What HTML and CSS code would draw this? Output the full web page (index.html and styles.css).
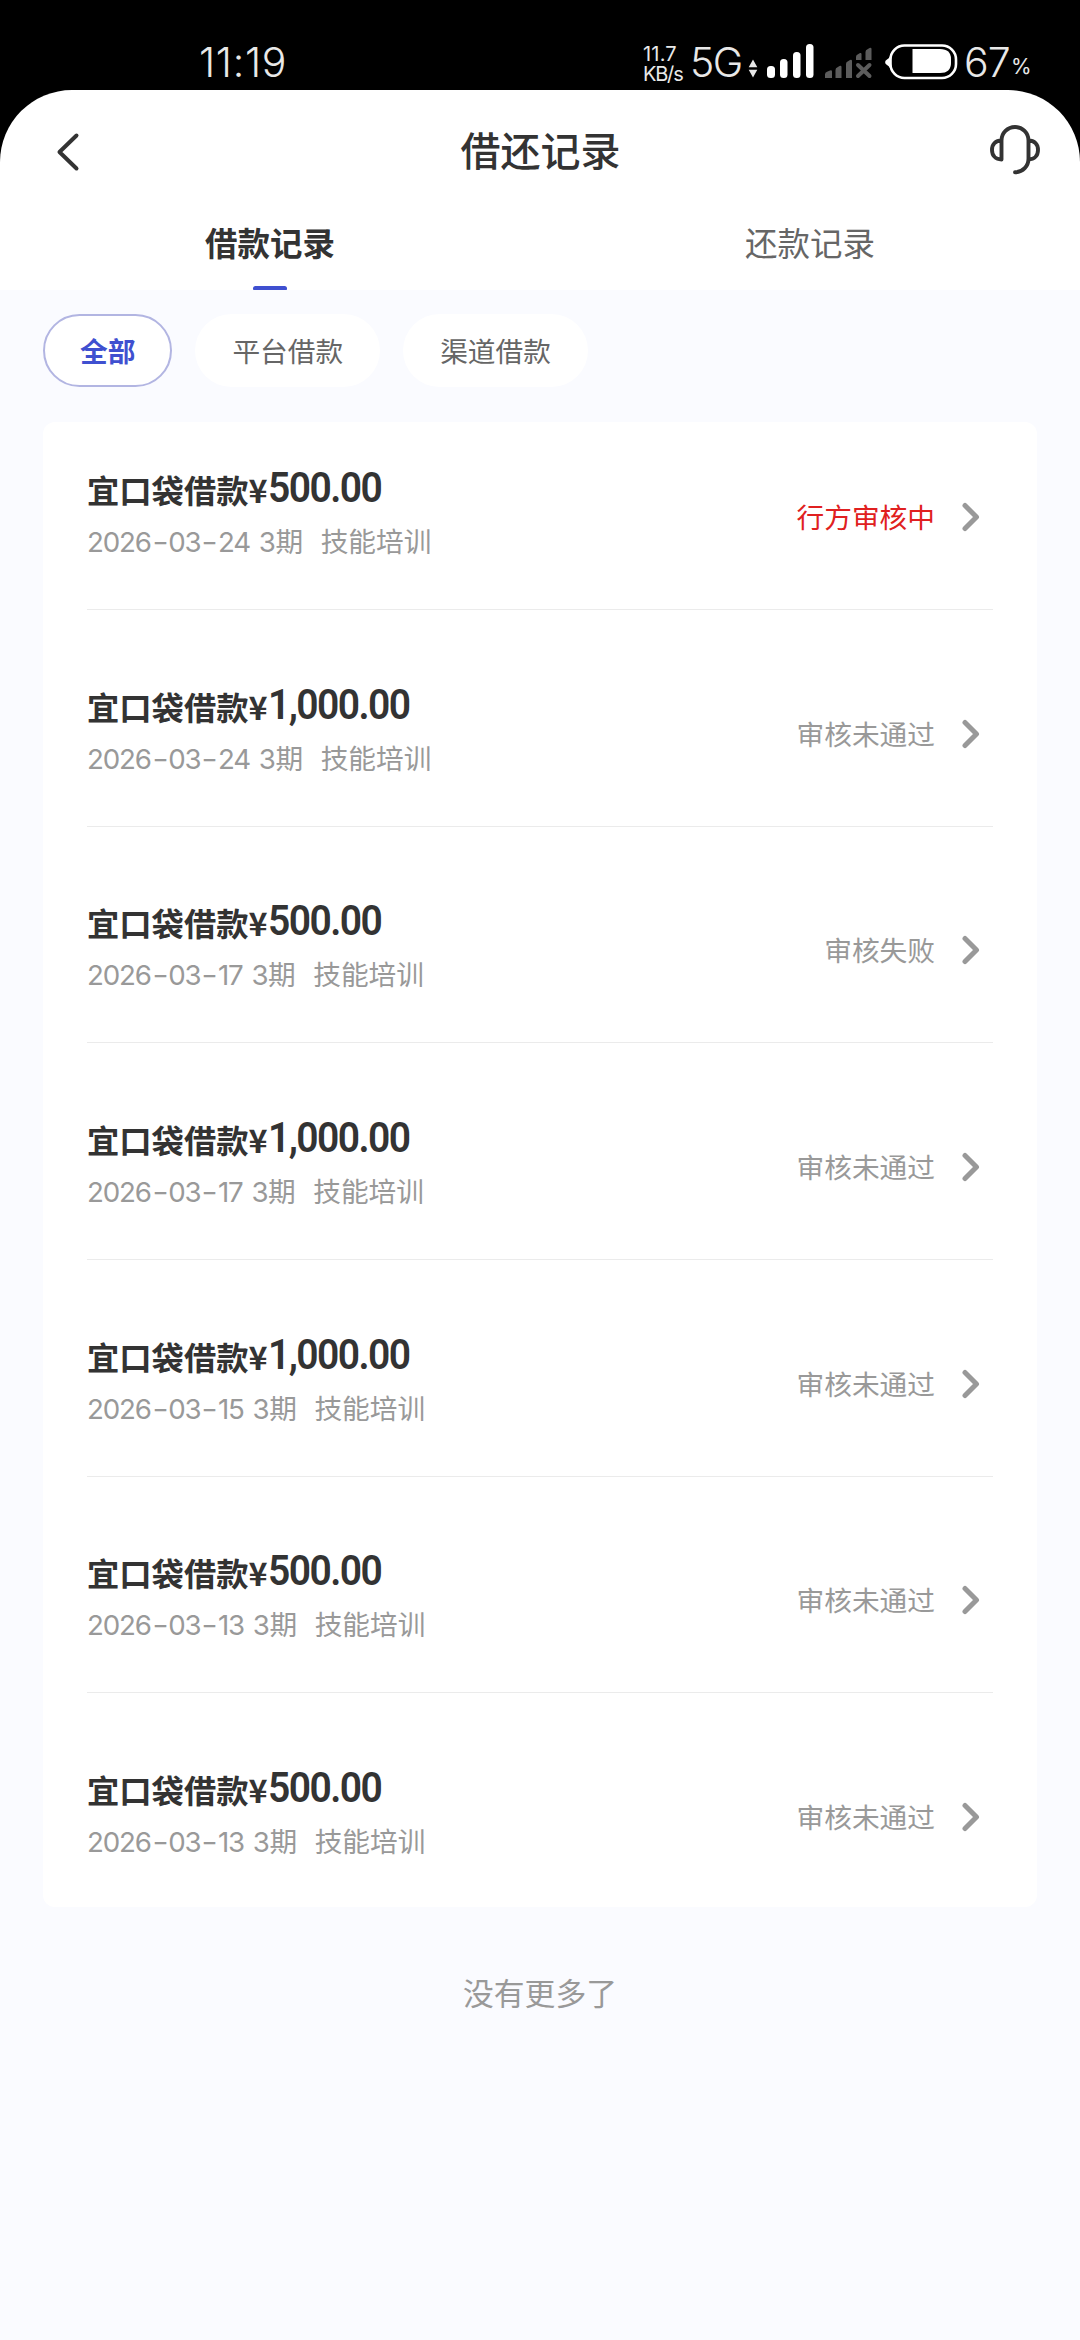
FILE: index.html
```html
<!DOCTYPE html>
<html lang="zh-CN">
<head>
<meta charset="utf-8">
<title>借还记录</title>
<link rel="stylesheet" href="styles.css">
</head>
<body>
<div class="statusbar">
  <span class="clock">11:19</span>
  <div class="status-right">
    <div class="speed"><span class="rate">11.7</span><span class="unit">KB/s</span></div>
    <span class="network">5G</span>
    <svg class="signals" width="212" height="40" viewBox="747 42 212 40">
      <g fill="#e8e8e8"><path d="M753 59.5l4.3 7.8h-8.6zM753 77.500l4.300-7.800h-8.600z"/></g>
      <g fill="#fff"><rect x="767" y="66" width="8" height="12" rx="3.500"/><rect x="780" y="59" width="7.500" height="19" rx="3.500"/><rect x="793" y="52" width="7.500" height="26" rx="3.500"/><rect x="806" y="44" width="7.500" height="34" rx="3.500"/></g>
      <g fill="#5c5c5c"><path d="M825 78v-3.500q0-2 2-2.700l3-1.300q2-.6 2 1V78zM835.500 78V70q0-2 2-2.700l2-1.300q2-.6 2 1V78zM846 78V64q0-2 2-2.700l2-1.300q2-.6 2 1V78zM856 60v-3q0-2 2-2.700l2-1.300q1.500-.3 1.500 1V60zM865.500 60v-8q0-2 2-2.700l2-1.300q2-.6 2 1V60z"/></g>
      <path d="M858 65l11.500 11M869.500 65L858 76" stroke="#5c5c5c" stroke-width="4" stroke-linecap="round"/>
      <rect x="890.500" y="45.500" width="65.500" height="32.500" rx="14" fill="none" stroke="#fff" stroke-width="2.600"/>
      <path d="M890 56.500v11.500q-1-2-3.300-3.300a2.700 2.700 0 0 1 0-4.900Q889 58.500 890 56.500z" fill="#fff"/>
      <path d="M912.500 49H940q11 0 11 10v4q0 10-11 10h-27.500z" fill="#fff"/>
    </svg>
    <span class="battery">67</span><span class="percent">%</span>
  </div>
</div>
<div class="app">
  <header class="navbar">
    <svg class="back" width="24" height="40" viewBox="0 0 24 40"><path d="M20.500 3.500L3.500 20l17 16.500" fill="none" stroke="#333" stroke-width="4" stroke-linecap="round" stroke-linejoin="round"/></svg>
    <h1 class="title">借还记录</h1>
    <svg class="support" width="52" height="52" viewBox="0 0 52 52"><path d="M12.500 35.500V16.500a13.500 13.500 0 0 1 27 0V34.500c0 7.500-5.500 13.800-13.500 13.800M12.500 16.500C6.500 16.500 3 20.500 3 26s3.500 9.300 9.500 9.500M39.500 16.500c6 0 9.500 4 9.500 9.500s-3.500 9.300-9.500 9.500" fill="none" stroke="#333" stroke-width="3.900" stroke-linecap="round" stroke-linejoin="round"/></svg>
  </header>
  <nav class="tabs">
    <a class="tab active">借款记录</a>
    <a class="tab">还款记录</a>
  </nav>
  <main class="content">
    <div class="filters">
      <span class="pill selected">全部</span>
      <span class="pill">平台借款</span>
      <span class="pill">渠道借款</span>
    </div>
    <ul class="records">
      <li class="record">
        <div class="info"><div class="name">宜口袋借款¥<b class="amount">500.00</b></div><div class="meta"><span class="date">2026<i>-</i>03<i>-</i>24</span><span class="term">3期</span><span>技能培训</span></div></div>
        <span class="state pending">行方审核中</span><svg class="arrow" viewBox="0 0 18 30"><path d="M3 3.500L14.500 15 3 26.500"/></svg>
      </li>
      <li class="record">
        <div class="info"><div class="name">宜口袋借款¥<b class="amount">1,000.00</b></div><div class="meta"><span class="date">2026<i>-</i>03<i>-</i>24</span><span class="term">3期</span><span>技能培训</span></div></div>
        <span class="state">审核未通过</span><svg class="arrow" viewBox="0 0 18 30"><path d="M3 3.500L14.500 15 3 26.500"/></svg>
      </li>
      <li class="record">
        <div class="info"><div class="name">宜口袋借款¥<b class="amount">500.00</b></div><div class="meta"><span class="date">2026<i>-</i>03<i>-</i>17</span><span class="term">3期</span><span>技能培训</span></div></div>
        <span class="state">审核失败</span><svg class="arrow" viewBox="0 0 18 30"><path d="M3 3.500L14.500 15 3 26.500"/></svg>
      </li>
      <li class="record">
        <div class="info"><div class="name">宜口袋借款¥<b class="amount">1,000.00</b></div><div class="meta"><span class="date">2026<i>-</i>03<i>-</i>17</span><span class="term">3期</span><span>技能培训</span></div></div>
        <span class="state">审核未通过</span><svg class="arrow" viewBox="0 0 18 30"><path d="M3 3.500L14.500 15 3 26.500"/></svg>
      </li>
      <li class="record">
        <div class="info"><div class="name">宜口袋借款¥<b class="amount">1,000.00</b></div><div class="meta"><span class="date">2026<i>-</i>03<i>-</i>15</span><span class="term">3期</span><span>技能培训</span></div></div>
        <span class="state">审核未通过</span><svg class="arrow" viewBox="0 0 18 30"><path d="M3 3.500L14.500 15 3 26.500"/></svg>
      </li>
      <li class="record">
        <div class="info"><div class="name">宜口袋借款¥<b class="amount">500.00</b></div><div class="meta"><span class="date">2026<i>-</i>03<i>-</i>13</span><span class="term">3期</span><span>技能培训</span></div></div>
        <span class="state">审核未通过</span><svg class="arrow" viewBox="0 0 18 30"><path d="M3 3.500L14.500 15 3 26.500"/></svg>
      </li>
      <li class="record">
        <div class="info"><div class="name">宜口袋借款¥<b class="amount">500.00</b></div><div class="meta"><span class="date">2026<i>-</i>03<i>-</i>13</span><span class="term">3期</span><span>技能培训</span></div></div>
        <span class="state">审核未通过</span><svg class="arrow" viewBox="0 0 18 30"><path d="M3 3.500L14.500 15 3 26.500"/></svg>
      </li>
    </ul>
    <p class="nomore">没有更多了</p>
  </main>
</div>
</body>
</html>
```

FILE: styles.css
```css
* { box-sizing: border-box; margin: 0; padding: 0; }
body {
  width: 1080px;
  min-height: 2340px;
  background: #000;
  font-family: "Noto Sans CJK SC", sans-serif;
  color: #333;
}

/* system status bar */
.statusbar {
  display: flex;
  justify-content: space-between;
  height: 90px;
  padding: 42px 51px 0 199px;
  font-family: Inter, sans-serif;
  color: #e8e8e8;
}
.clock { font-size: 41px; font-weight: 300; line-height: 40px; letter-spacing: 0.7px; }
.status-right { display: flex; height: 40px; }
.speed { display: flex; flex-direction: column; width: 47px; font-size: 20px; line-height: 20px; padding-top: 2px; }
.rate { letter-spacing: 0.2px; }
.unit { letter-spacing: -1.2px; }
.network { width: 57px; font-size: 41px; font-weight: 300; line-height: 40px; letter-spacing: -1.5px; }
.signals { flex: none; }
.battery { width: 52px; padding-left: 5px; font-size: 41px; font-weight: 300; line-height: 40px; letter-spacing: -0.800px; }
.percent { width: 18px; font-size: 21px; line-height: 50px; }

.app {
  display: flex;
  flex-direction: column;
  min-height: 2250px;
  background: #fff;
  border-radius: 72px 72px 0 0;
}

/* title bar */
.navbar {
  display: flex;
  align-items: center;
  justify-content: space-between;
  height: 120px;
  padding: 0 39px 0 56px;
}
.back { margin-top: 3px; }
.title { font-size: 40px; font-weight: 500; line-height: 58px; margin: -2px 0 0 12px; }

/* tabs */
.tabs { display: grid; grid-template-columns: 1fr 1fr; height: 80px; }
.tab {
  display: flex;
  flex-direction: column;
  align-items: center;
  padding-top: 8px;
  font-size: 32.500px;
  line-height: 48px;
  color: #666;
}
.tab.active { font-weight: 700; color: #333; }
.tab.active::after {
  content: "";
  width: 34px;
  height: 5px;
  margin-top: 20px;
  border-radius: 3px;
  background: #3f50d0;
}

.content { flex: 1; padding: 24px 43px 0; background: #fafbff; }

/* filter pills */
.filters { display: flex; gap: 23px; }
.pill {
  height: 73px;
  padding: 0 37px;
  border-radius: 37px;
  background: #fff;
  font-size: 27.700px;
  line-height: 73px;
  color: #666;
}
.pill.selected {
  padding: 0 35px;
  border: 2px solid #b2b5e2;
  line-height: 69px;
  font-weight: 700;
  color: #3f50d0;
}

/* loan records */
.records {
  margin-top: 35px;
  padding: 0 44px;
  border-radius: 12px;
  background: #fff;
  list-style: none;
}
.record {
  display: flex;
  align-items: flex-end;
  height: 216.700px;
  padding-bottom: 65px;
  border-bottom: 1.500px solid #ebebeb;
}
.record:first-child { height: 188px; }
.record:last-child { height: 214px; padding-bottom: 62px; border-bottom-color: transparent; }
.info { flex: 1; margin-bottom: -23px; }
.name { height: 52px; font-size: 32.300px; font-weight: 700; line-height: 49px; white-space: nowrap; }
.amount {
  display: inline-block;
  font: 600 42px/40px Roboto, sans-serif;
  letter-spacing: -1.700px;
  transform: translateY(-1px) scaleX(0.93);
  transform-origin: left;
}
.meta {
  display: flex;
  height: 50px;
  font: 400 27.700px/50px Inter, "Noto Sans CJK SC", sans-serif;
  color: #999;
}
.date { margin-right: 9px; letter-spacing: -1.200px; }
.date i { display: inline-block; margin: 0 3px; font-style: normal; transform: scaleX(1.300); }
.term { margin-right: 18px; letter-spacing: -0.500px; }
.state { height: 55px; font-size: 27.700px; line-height: 54px; color: #999; }
.pending { color: #e02020; }
.arrow { width: 18px; height: 30px; margin: 0 13px 12px 27px; fill: none; stroke: #999; stroke-width: 5; stroke-linecap: round; stroke-linejoin: round; }

.nomore { margin-top: 62px; text-align: center; font-size: 30.800px; line-height: 46px; color: #999; }
```
